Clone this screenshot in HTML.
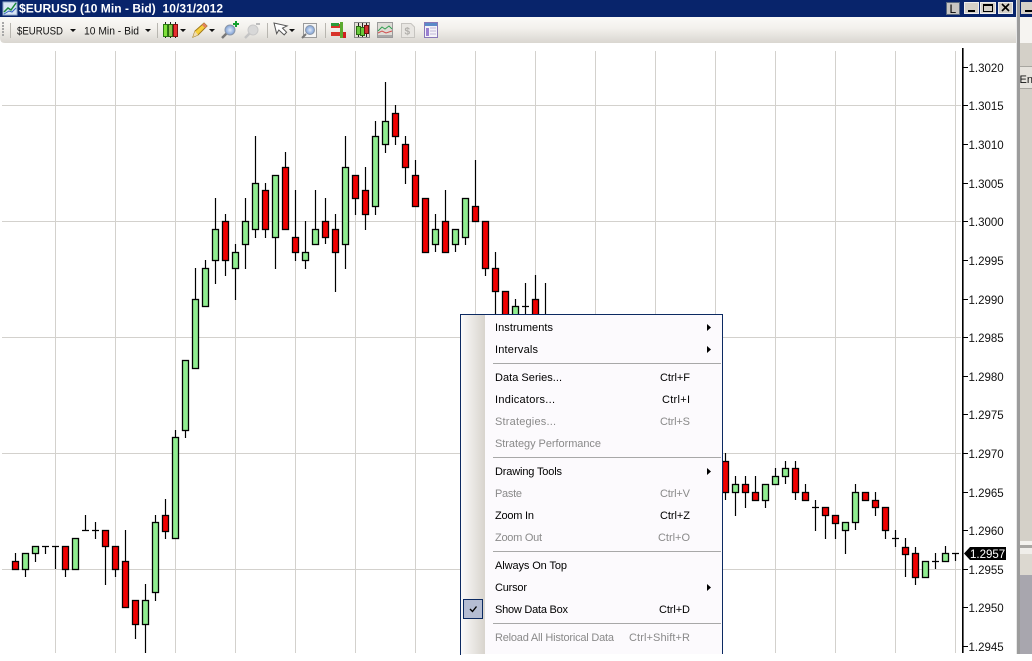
<!DOCTYPE html>
<html><head><meta charset="utf-8"><title>$EURUSD</title>
<style>
html,body{margin:0;padding:0;width:1032px;height:661px;overflow:hidden;background:#fff}
svg{display:block;font-family:"Liberation Sans",Arial,sans-serif;font-size:11px}
.d{fill:#8a8a8a}
</style></head><body>
<svg width="1032" height="661" viewBox="0 0 1032 661" xmlns="http://www.w3.org/2000/svg">
<defs>
<linearGradient id="tb" x1="0" y1="0" x2="0" y2="1"><stop offset="0" stop-color="#fbfaf8"/><stop offset=".45" stop-color="#f2f0ec"/><stop offset="1" stop-color="#d9d6d0"/></linearGradient>
<linearGradient id="st" x1="0" y1="0" x2="1" y2="0"><stop offset="0" stop-color="#fbfafa"/><stop offset="1" stop-color="#d8d4cd"/></linearGradient>
<radialGradient id="gl"><stop offset="0" stop-color="#dfeaf8"/><stop offset="1" stop-color="#7d9fd6"/></radialGradient>
</defs>
<rect width="1032" height="661" fill="#fff"/>
<!-- title bar -->
<rect x="0" y="0" width="1016" height="17" fill="#08246b"/>
<rect x="3" y="2" width="14" height="13" fill="#d8e4f4" stroke="#8fa8c8"/>
<path d="M4 12L8 8L11 10L16 3" fill="none" stroke="#1a8a3a" stroke-width="1.5"/>
<path d="M4 14L9 11L12 12L16 8" fill="none" stroke="#3060c0"/>
<text x="19" y="12.5" fill="#fff" font-weight="bold" font-size="12" textLength="204" lengthAdjust="spacing" xml:space="preserve">$EURUSD (10 Min - Bid)  10/31/2012</text>
<!-- window buttons -->
<rect x="946.5" y="2.5" width="13" height="12" fill="#c8c6c2" stroke="#5a6a80"/>
<text x="949.5" y="13" fill="#000" font-size="12">L</text>
<g fill="#d4d0c8" stroke="#eee">
<rect x="964.5" y="2.5" width="14" height="11"/><rect x="980.5" y="2.5" width="15" height="11"/><rect x="998.5" y="2.5" width="14" height="11"/>
</g>
<path d="M968 11H975" stroke="#000" stroke-width="2"/>
<rect x="983.5" y="4.5" width="9" height="7" fill="none" stroke="#000"/><path d="M983 5H993" stroke="#000" stroke-width="2"/>
<path d="M1002 4L1009 11M1009 4L1002 11" stroke="#000" stroke-width="1.6"/>
<!-- toolbar -->
<path d="M0 17H1016V43H5Q0 43 0 38Z" fill="url(#tb)"/>
<path d="M3 22V36" stroke="#a8a8a8" stroke-width="2" stroke-dasharray="2 1"/>
<path d="M10.5 23V38M157.5 23V38M267.5 23V38M325.5 23V38" stroke="#b8b6b0"/>
<text x="17" y="34.5" fill="#111" textLength="46" lengthAdjust="spacingAndGlyphs">$EURUSD</text>
<text x="84" y="34.5" fill="#111" textLength="55" lengthAdjust="spacingAndGlyphs">10 Min - Bid</text>
<path d="M70 29H76L73 32ZM145 29H151L148 32ZM180 29H186L183 32ZM209 29H215L212 32ZM289 29H295L292 32Z" fill="#111"/>
<!-- candle icon -->
<path d="M165.5 22V38M170.5 22V38M175.5 22V38" stroke="#222"/>
<rect x="163.5" y="24.5" width="4" height="12" fill="#7fe03a" stroke="#2a7a10"/>
<rect x="168.5" y="24.5" width="4" height="12" fill="#8bc34a" stroke="#2a6a10"/>
<rect x="173.5" y="24.5" width="4" height="12" fill="#e83030" stroke="#801010"/>
<!-- pencil -->
<path d="M193 37L195 31L204 23L207 26L198 35Z" fill="#f6cf3c" stroke="#a07818"/><path d="M193 37L195 31L198 35Z" fill="#f0dcb0"/><path d="M204 23L207 26L205 28L202 25Z" fill="#e08060"/>
<!-- zoom in -->
<path d="M222 38L227 33" stroke="#777" stroke-width="2.5"/><circle cx="230" cy="30" r="5" fill="url(#gl)" stroke="#8a97a8"/>
<path d="M236 21V27M233 24H239" stroke="#12a030" stroke-width="2"/>
<!-- zoom out -->
<path d="M245 38L250 33" stroke="#c4c4c4" stroke-width="2.5"/><circle cx="253" cy="30" r="5" fill="#d8d8d8" stroke="#c8c8c8"/>
<path d="M256 24H260" stroke="#bdbdbd" stroke-width="2"/>
<!-- cursor -->
<path d="M274 23V34L277 31L281 37L284 35L281 30L286 29Z" transform="rotate(-14 274 23)" fill="#fff" stroke="#555"/>
<!-- page zoom -->
<rect x="303.5" y="23.5" width="13" height="14" fill="#f4f4f4" stroke="#9a9a9a"/>
<circle cx="310" cy="30" r="4.5" fill="url(#gl)" stroke="#8a97a8"/><path d="M302 38L306 34" stroke="#777" stroke-width="2"/>
<!-- data series -->
<path d="M331 24H340L343 26L340 28H331ZM331 32H340L343 34L340 36H331Z" fill="#d8332a"/><path d="M331 23H339V26H331Z" fill="#2a9a3a"/>
<path d="M341.5 22V38" stroke="#5caa30" stroke-width="3"/><rect x="343" y="32" width="3" height="6" fill="#d02020"/>
<!-- indicators -->
<rect x="354.5" y="22.5" width="15" height="15" fill="#e4e0d6" stroke="#888"/>
<path d="M358.5 23V37M366.5 23V37M362.5 23V37" stroke="#222"/>
<rect x="356.5" y="26.5" width="4" height="8" fill="#68c83a" stroke="#2a6a10"/><rect x="360.5" y="27.5" width="4" height="8" fill="#68c83a" stroke="#2a6a10"/><rect x="364.5" y="25.5" width="4" height="8" fill="#d03030" stroke="#701010"/>
<!-- chart lines -->
<rect x="377.5" y="22.5" width="15" height="15" fill="#dedcd6" stroke="#9a9a9a"/>
<path d="M378 31L382 27L385 29L389 26L392 29" fill="none" stroke="#30a050"/><path d="M378 33L382 31L386 33L392 31" fill="none" stroke="#d05050"/>
<path d="M378 37V35H392V37Z" fill="#a8a8a8"/>
<!-- dollar doc -->
<path d="M401.5 23.5H411L414.5 27V37.5H401.5Z" fill="#e8e6e2" stroke="#c6c4c0"/>
<text x="404.5" y="34.5" fill="#b0aeaa" font-weight="bold" font-size="10">$</text>
<!-- layout -->
<rect x="424.5" y="22.5" width="13" height="15" fill="#f4f2f8" stroke="#8878b8"/>
<rect x="425" y="23" width="12" height="3" fill="#5a8ac8"/><rect x="426" y="28" width="3" height="8" fill="#9a80d0"/>
<path d="M430 28H436M430 31H436M430 34H436" stroke="#c0b8d8"/>

<!-- grid -->
<g stroke="#d3d1cd" stroke-width="1" shape-rendering="crispEdges">
<path d="M2 105.5H961M2 221.5H961M2 337.5H961M2 453.5H961M2 569.5H961"/>
<path d="M55.5 51V653M115.5 51V653M175.5 51V653M235.5 51V653M295.5 51V653M355.5 51V653M415.5 51V653M475.5 51V653M535.5 51V653M595.5 51V653M655.5 51V653M715.5 51V653M775.5 51V653M835.5 51V653M895.5 51V653M955.5 51V653"/>
</g>

<!-- wicks -->
<path fill="none" stroke="#000" stroke-width="1.2" d="
M15.5 553V569M25.5 553V577M35.5 546V562M45.5 546V554M42 546.5H49M55.5 546V569M52 546.5H59M65.5 546V577M75.5 538V569
M85.5 515V530M82 530.5H89M95.5 522V539M92 530.5H99M105.5 530V585M115.5 546V577M125.5 530V608M135.5 600V639M145.5 584V653M155.5 515V601M165.5 499V539M175.5 430V538M185.5 360V438M195.5 268V369M205.5 260V306M215.5 198V284M225.5 214V276M235.5 244V300M245.5 198V269M255.5 136V238M265.5 183V238M275.5 175V269M285.5 152V229M295.5 190V261M305.5 221V269M315.5 190V244M325.5 198V244M335.5 214V292M345.5 136V269M355.5 175V215M365.5 167V230M375.5 121V215M385.5 82V153M395.5 105V145M405.5 136V184M415.5 160V206M425.5 198V252M435.5 214V252M445.5 190V252M455.5 229V252M465.5 198V245M475.5 160V221M485.5 221V276M495.5 252V314M505.5 291V314M515.5 299V314M525.5 283V314M522 306.5H529M535.5 275V314M545.5 283V314
M725.5 453V500M735.5 476V516M745.5 476V508M755.5 476V500M765.5 484V508M775.5 468V484M785.5 461V484M795.5 461V500M805.5 484V500M815.5 500V531M812 507.5H819M825.5 507V539M835.5 516V539M845.5 522V554M855.5 484V530M865.5 492V500M875.5 492V516M885.5 507V539M895.5 530V547M892 538.5H899M905.5 538V577M915.5 547V585M925.5 561V577M935.5 553V569M932 561.5H939M945.5 546V561M955.5 553V561M952 553.5H959"/>

<!-- bullish bodies -->
<g fill="#90ee90" stroke="#000" stroke-width="1.3">
<rect x="22.5" y="553.5" width="6" height="16"/><rect x="32.5" y="546.5" width="6" height="7"/><rect x="72.5" y="538.5" width="6" height="31"/><rect x="142.5" y="600.5" width="6" height="24"/><rect x="152.5" y="522.5" width="6" height="70"/><rect x="172.5" y="437.5" width="6" height="101"/><rect x="182.5" y="360.5" width="6" height="70"/><rect x="192.5" y="299.5" width="6" height="69"/><rect x="202.5" y="268.5" width="6" height="38"/><rect x="212.5" y="229.5" width="6" height="31"/><rect x="232.5" y="252.5" width="6" height="16"/><rect x="242.5" y="221.5" width="6" height="23"/><rect x="252.5" y="183.5" width="6" height="46"/><rect x="272.5" y="175.5" width="6" height="62"/><rect x="302.5" y="252.5" width="6" height="8"/><rect x="312.5" y="229.5" width="6" height="15"/><rect x="342.5" y="167.5" width="6" height="77"/><rect x="372.5" y="136.5" width="6" height="70"/><rect x="382.5" y="121.5" width="6" height="23"/><rect x="432.5" y="229.5" width="6" height="15"/><rect x="452.5" y="229.5" width="6" height="15"/><rect x="462.5" y="198.5" width="6" height="39"/><rect x="512.5" y="306.5" width="6" height="20"/>
<rect x="732.5" y="484.5" width="6" height="8"/><rect x="762.5" y="484.5" width="6" height="16"/><rect x="772.5" y="476.5" width="6" height="8"/><rect x="782.5" y="468.5" width="6" height="8"/><rect x="842.5" y="522.5" width="6" height="8"/><rect x="852.5" y="492.5" width="6" height="30"/><rect x="922.5" y="561.5" width="6" height="16"/><rect x="942.5" y="553.5" width="6" height="8"/>
</g>
<!-- bearish bodies -->
<g fill="#f00000" stroke="#000" stroke-width="1.3">
<rect x="12.5" y="561.5" width="6" height="8"/><rect x="62.5" y="546.5" width="6" height="23"/><rect x="102.5" y="530.5" width="6" height="16"/><rect x="112.5" y="546.5" width="6" height="23"/><rect x="122.5" y="561.5" width="6" height="46"/><rect x="132.5" y="600.5" width="6" height="24"/><rect x="162.5" y="515.5" width="6" height="16"/><rect x="222.5" y="221.5" width="6" height="39"/><rect x="262.5" y="190.5" width="6" height="39"/><rect x="282.5" y="167.5" width="6" height="62"/><rect x="292.5" y="237.5" width="6" height="15"/><rect x="322.5" y="221.5" width="6" height="16"/><rect x="332.5" y="229.5" width="6" height="23"/><rect x="352.5" y="175.5" width="6" height="23"/><rect x="362.5" y="190.5" width="6" height="24"/><rect x="392.5" y="113.5" width="6" height="23"/><rect x="402.5" y="144.5" width="6" height="23"/><rect x="412.5" y="175.5" width="6" height="31"/><rect x="422.5" y="198.5" width="6" height="54"/><rect x="442.5" y="221.5" width="6" height="31"/><rect x="472.5" y="206.5" width="6" height="15"/><rect x="482.5" y="221.5" width="6" height="47"/><rect x="492.5" y="268.5" width="6" height="23"/><rect x="502.5" y="291.5" width="6" height="35"/><rect x="532.5" y="299.5" width="6" height="27"/>
<rect x="722.5" y="461.5" width="6" height="31"/><rect x="742.5" y="484.5" width="6" height="8"/><rect x="752.5" y="492.5" width="6" height="8"/><rect x="792.5" y="468.5" width="6" height="24"/><rect x="802.5" y="492.5" width="6" height="8"/><rect x="822.5" y="507.5" width="6" height="8"/><rect x="832.5" y="515.5" width="6" height="8"/><rect x="862.5" y="492.5" width="6" height="8"/><rect x="872.5" y="500.5" width="6" height="7"/><rect x="882.5" y="507.5" width="6" height="23"/><rect x="902.5" y="547.5" width="6" height="7"/><rect x="912.5" y="553.5" width="6" height="24"/>
</g>

<!-- axis -->
<rect x="962" y="48" width="1.6" height="605" fill="#000"/>
<path shape-rendering="crispEdges" stroke="#000" d="M963 67.5H968M963 105.5H968M963 144.5H968M963 183.5H968M963 221.5H968M963 260.5H968M963 299.5H968M963 337.5H968M963 376.5H968M963 414.5H968M963 453.5H968M963 492.5H968M963 530.5H968M963 569.5H968M963 607.5H968M963 646.5H968"/>
<g fill="#111" font-size="11.5">
<text x="968.5" y="72">1.3020</text><text x="968.5" y="110">1.3015</text><text x="968.5" y="149">1.3010</text><text x="968.5" y="188">1.3005</text><text x="968.5" y="226">1.3000</text><text x="968.5" y="265">1.2995</text><text x="968.5" y="304">1.2990</text><text x="968.5" y="342">1.2985</text><text x="968.5" y="381">1.2980</text><text x="968.5" y="419">1.2975</text><text x="968.5" y="458">1.2970</text><text x="968.5" y="497">1.2965</text><text x="968.5" y="535">1.2960</text><text x="968.5" y="574">1.2955</text><text x="968.5" y="612">1.2950</text><text x="968.5" y="651">1.2945</text>
</g>
<path d="M964 553.5L970 547H1006V560H970Z" fill="#000"/>
<text x="970" y="558" fill="#fff" font-size="11.5">1.2957</text>

<!-- context menu -->
<rect x="460.5" y="314.5" width="262" height="340" fill="#fcfafd" stroke="#0c2a62"/>
<rect x="461" y="315" width="24" height="339" fill="url(#st)"/>
<rect x="461" y="654" width="262" height="7" fill="#fff"/>
<path shape-rendering="crispEdges" stroke="#a8a8a8" d="M493 363.5H721M493 457.5H721M493 551.5H721M493 623.5H721"/>
<g fill="#000">
<text x="495" y="331" textLength="58" lengthAdjust="spacing">Instruments</text>
<text x="495" y="353" textLength="43" lengthAdjust="spacing">Intervals</text>
<text x="495" y="381" textLength="67" lengthAdjust="spacing">Data Series...</text>
<text x="495" y="403" textLength="60" lengthAdjust="spacing">Indicators...</text>
<text x="495" y="475" textLength="67" lengthAdjust="spacing">Drawing Tools</text>
<text x="495" y="519" textLength="39" lengthAdjust="spacing">Zoom In</text>
<text x="495" y="569" textLength="72" lengthAdjust="spacing">Always On Top</text>
<text x="495" y="591" textLength="32" lengthAdjust="spacing">Cursor</text>
<text x="495" y="613" textLength="73" lengthAdjust="spacing">Show Data Box</text>
<text x="660" y="381" textLength="30" lengthAdjust="spacing">Ctrl+F</text>
<text x="662" y="403" textLength="28" lengthAdjust="spacing">Ctrl+I</text>
<text x="660" y="519" textLength="30" lengthAdjust="spacing">Ctrl+Z</text>
<text x="659" y="613" textLength="31" lengthAdjust="spacing">Ctrl+D</text>
</g>
<g class="d">
<text x="495" y="425" textLength="61" lengthAdjust="spacing">Strategies...</text>
<text x="495" y="447" textLength="106" lengthAdjust="spacing">Strategy Performance</text>
<text x="495" y="497" textLength="27" lengthAdjust="spacing">Paste</text>
<text x="495" y="541" textLength="47" lengthAdjust="spacing">Zoom Out</text>
<text x="495" y="641" textLength="119" lengthAdjust="spacing">Reload All Historical Data</text>
<text x="660" y="425" textLength="30" lengthAdjust="spacing">Ctrl+S</text>
<text x="660" y="497" textLength="30" lengthAdjust="spacing">Ctrl+V</text>
<text x="658" y="541" textLength="32" lengthAdjust="spacing">Ctrl+O</text>
<text x="629" y="641" textLength="61" lengthAdjust="spacing">Ctrl+Shift+R</text>
</g>
<path d="M707 324L711 327.5L707 331ZM707 346L711 349.5L707 353ZM707 468L711 471.5L707 475ZM707 584L711 587.5L707 591Z" fill="#000"/>
<rect x="463.5" y="599.5" width="19" height="19" fill="#b5bdd3" stroke="#0c2a62"/>
<path d="M470 609L472.5 611.5L476.5 606.5" fill="none" stroke="#000" stroke-width="1.4"/>

<!-- right side: neighbouring window -->
<rect x="1016" y="0" width="1" height="654" fill="#e8e8e8"/>
<rect x="1017" y="0" width="3" height="654" fill="#9c9c9c"/>
<rect x="1020" y="0" width="12" height="654" fill="#d4d0c8"/>
<rect x="1020" y="0" width="12" height="17" fill="#08246b"/>
<rect x="1021" y="2" width="11" height="12" fill="#d4d0c8"/>
<path d="M1025 11H1032" stroke="#000" stroke-width="2"/>
<rect x="1020" y="17" width="12" height="26" fill="#f6f4f1"/>
<path d="M1020 66.5H1032M1020 88.5H1032" stroke="#a8a6a0"/>
<rect x="1020" y="67" width="12" height="21" fill="#e6e3dd"/>
<text x="1019.5" y="83" fill="#111" font-size="11">En</text>
<rect x="1020" y="541" width="12" height="4" fill="#f4f2ee"/>
<rect x="1020" y="545" width="12" height="3" fill="#a8a6a2"/>
<rect x="1020" y="548" width="12" height="6" fill="#f0eeea"/>
<rect x="1020" y="554" width="12" height="21" fill="#dcd8d0"/>
<rect x="1020" y="575" width="12" height="79" fill="#a8a6ae"/>
<rect x="1016" y="654" width="16" height="7" fill="#fff"/>
</svg>
</body></html>
